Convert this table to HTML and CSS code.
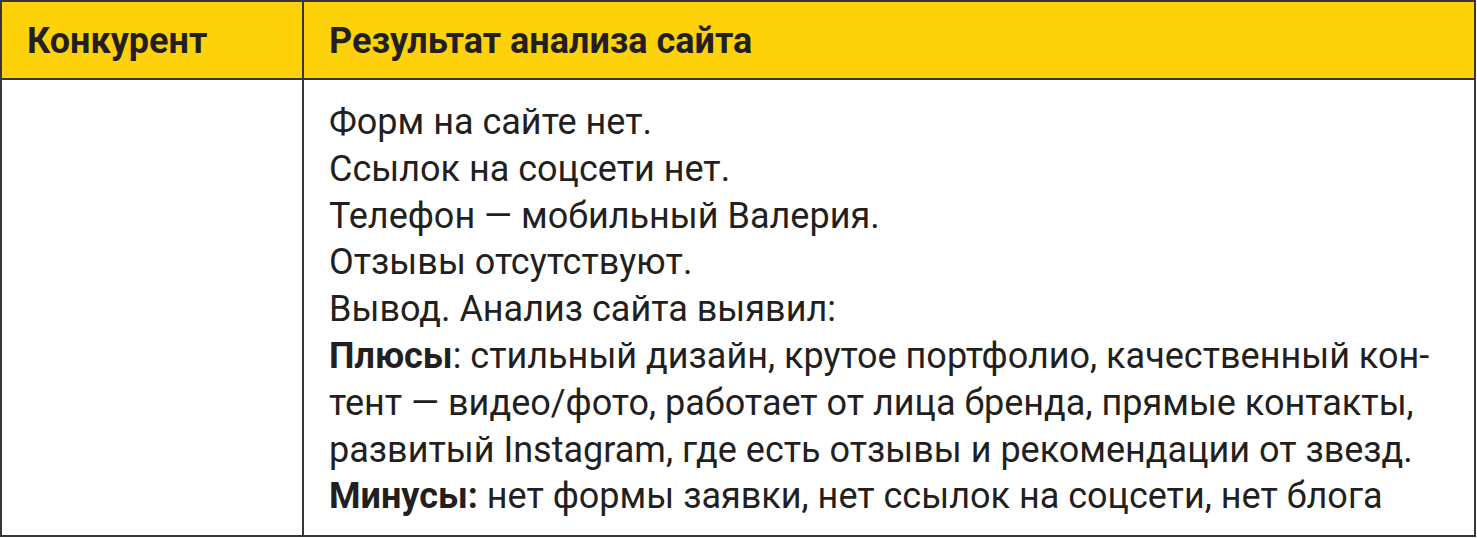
FILE: index.html
```html
<!DOCTYPE html>
<html lang="ru">
<head>
<meta charset="utf-8">
<link rel="stylesheet" href="styles.css">
</head>
<body>
<table class="tbl">
  <thead>
    <tr>
      <th class="col-a">Конкурент</th>
      <th class="col-b">Результат анализа сайта</th>
    </tr>
  </thead>
  <tbody>
    <tr>
      <td class="col-a"></td>
      <td class="col-b">
        <div class="line">Форм на сайте нет.</div>
        <div class="line">Ссылок на соцсети нет.</div>
        <div class="line">Телефон — мобильный Валерия.</div>
        <div class="line">Отзывы отсутствуют.</div>
        <div class="line">Вывод. Анализ сайта выявил:</div>
        <div class="line"><b>Плюсы</b>: стильный дизайн, крутое портфолио, качественный кон-</div>
        <div class="line">тент — видео/фото, работает от лица бренда, прямые контакты,</div>
        <div class="line">развитый Instagram, где есть отзывы и рекомендации от звезд.</div>
        <div class="line"><b>Минусы:</b> нет формы заявки, нет ссылок на соцсети, нет блога</div>
      </td>
    </tr>
  </tbody>
</table>
</body>
</html>
```
FILE: styles.css
```css
html, body {
  margin: 0;
  padding: 0;
  background: #ffffff;
}
body {
  width: 1477px;
  height: 538px;
  overflow: hidden;
  font-family: Roboto, "Noto Sans", sans-serif;
  color: #231f20;
}
.tbl {
  border-collapse: collapse;
  width: 1476px;
  height: 537px;
  table-layout: fixed;
}
.tbl th, .tbl td {
  border: 2px solid #3a3637;
  text-align: left;
  vertical-align: top;
}
.tbl th {
  background: #fdd20b;
  height: 74px;
  padding: 2px 25px 0 25px;
  vertical-align: middle;
  font-size: 36px;
  font-weight: 700;
}
.tbl th.col-a { width: 250px; }
.tbl td {
  padding: 19px 25px 10px 25px;
  font-size: 36px;
  line-height: 46.8px;
}
.line {
  white-space: nowrap;
}
.line b {
  font-weight: 700;
}
```
